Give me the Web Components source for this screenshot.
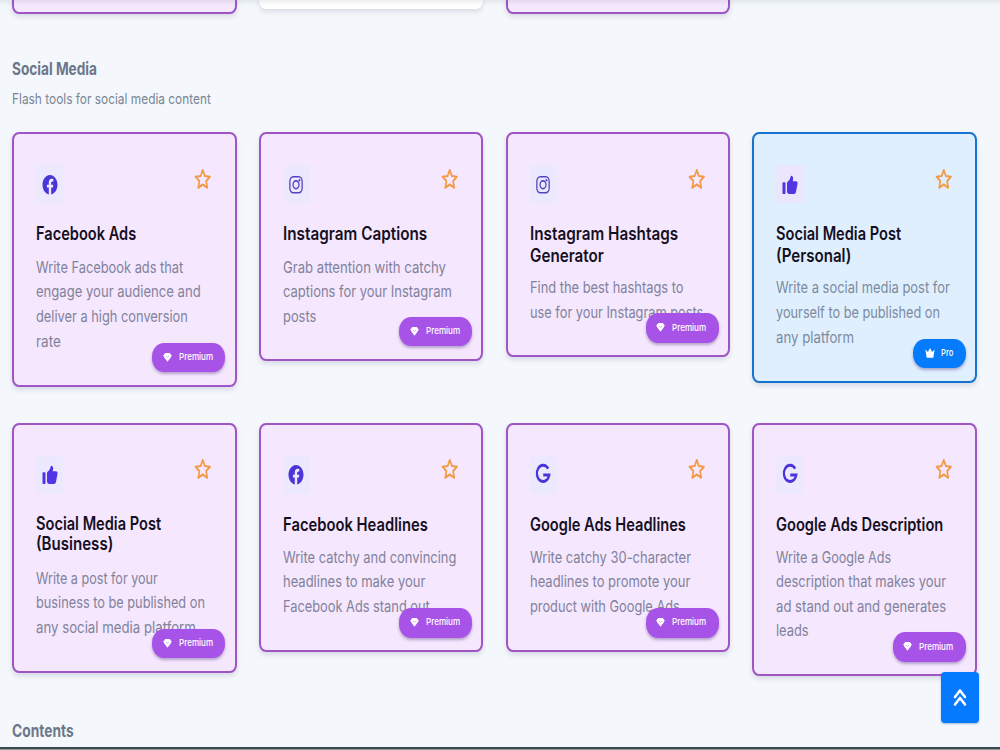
<!DOCTYPE html>
<html lang="en">
<head>
<meta charset="utf-8">
<title>Flash tools</title>
<style>
    html, body {
        margin: 0;
        height: 750px;
        overflow: hidden;
        background: #f4f8fc;
        font-family: Inter, "Open Sans", sans-serif;
    }
</style>
</head>
<body>
<tool-page>
    <card-row slot="previous" style="--top: -240px">
        <tool-card style="--h: 253.5px"></tool-card>
        <tool-card kind="plain" style="--h: 249px"></tool-card>
        <tool-card style="--h: 253.5px"></tool-card>
    </card-row>

    <section-head>
        <fit-line w="85">Social Media</fit-line>
        <fit-line slot="sub" w="198.5">Flash tools for social media content</fit-line>
    </section-head>

    <card-row style="--row: 290.3px">
        <tool-card icon="facebook" badge="Premium" style="--h: 254.5px; --gap: 10.6px">
            <fit-line slot="title" w="100.5">Facebook Ads</fit-line>
            <fit-line w="147.5">Write Facebook ads that</fit-line>
            <fit-line w="165">engage your audience and</fit-line>
            <fit-line w="151.5">deliver a high conversion</fit-line>
            <fit-line w="24.5">rate</fit-line>
        </tool-card>
        <tool-card icon="instagram" badge="Premium" style="--h: 228.7px; --gap: 10.6px">
            <fit-line slot="title" w="144.5">Instagram Captions</fit-line>
            <fit-line w="162.5">Grab attention with catchy</fit-line>
            <fit-line w="168.5">captions for your Instagram</fit-line>
            <fit-line w="33">posts</fit-line>
        </tool-card>
        <tool-card icon="instagram" badge="Premium" style="--h: 225.2px; --gap: 9.2px; --lh: 21.5px">
            <fit-line slot="title" w="148.5">Instagram Hashtags</fit-line>
            <fit-line slot="title" w="73.5">Generator</fit-line>
            <fit-line w="153.5">Find the best hashtags to</fit-line>
            <fit-line w="173.5">use for your Instagram posts</fit-line>
        </tool-card>
        <tool-card kind="pro" icon="thumb" badge="Pro" style="--h: 250.7px; --gap: 9.2px; --lh: 21.5px">
            <fit-line slot="title" w="125">Social Media Post</fit-line>
            <fit-line slot="title" w="75.5">(Personal)</fit-line>
            <fit-line w="173.5">Write a social media post for</fit-line>
            <fit-line w="164">yourself to be published on</fit-line>
            <fit-line w="78.5">any platform</fit-line>
        </tool-card>
    </card-row>

    <card-row>
        <tool-card icon="thumb" badge="Premium" style="--h: 250px; --gap: 10.5px; --lh: 20.8px">
            <fit-line slot="title" w="125">Social Media Post</fit-line>
            <fit-line slot="title" w="77">(Business)</fit-line>
            <fit-line w="122">Write a post for your</fit-line>
            <fit-line w="169">business to be published on</fit-line>
            <fit-line w="159.5">any social media platform</fit-line>
        </tool-card>
        <tool-card icon="facebook" badge="Premium" style="--h: 229.6px; --gap: 10px">
            <fit-line slot="title" w="144.5">Facebook Headlines</fit-line>
            <fit-line w="173.5">Write catchy and convincing</fit-line>
            <fit-line w="142">headlines to make your</fit-line>
            <fit-line w="146.5">Facebook Ads stand out</fit-line>
        </tool-card>
        <tool-card icon="google" badge="Premium" style="--h: 229.6px; --gap: 10px">
            <fit-line slot="title" w="156">Google Ads Headlines</fit-line>
            <fit-line w="161">Write catchy 30-character</fit-line>
            <fit-line w="160.5">headlines to promote your</fit-line>
            <fit-line w="149.5">product with Google Ads</fit-line>
        </tool-card>
        <tool-card icon="google" badge="Premium" style="--h: 253.7px; --gap: 10px">
            <fit-line slot="title" w="167">Google Ads Description</fit-line>
            <fit-line w="115.5">Write a Google Ads</fit-line>
            <fit-line w="170">description that makes your</fit-line>
            <fit-line w="170">ad stand out and generates</fit-line>
            <fit-line w="33">leads</fit-line>
        </tool-card>
    </card-row>

    <section-head style="--head-top: 42.7px">
        <fit-line w="61.5">Contents</fit-line>
    </section-head>

    <top-button slot="floating"></top-button>
</tool-page>

<script>
// single line of text, condensed to the width given in "w"
class FitLine extends HTMLElement {
    constructor() {
        super();
        this.attachShadow({mode: "open"}).innerHTML = `
            <style>
                :host { display: block; white-space: nowrap; }
                span { display: inline-block; transform-origin: 0 50%; }
            </style>
            <span><slot></slot></span>`;
    }

    connectedCallback() {
        const span = this.shadowRoot.querySelector("span");
        this.style.width = this.getAttribute("w") + "px";
        span.style.transform = `scaleX(${this.getAttribute("w") / span.offsetWidth})`;
    }
}

// icons are stretched vertically like the rest of the page
const ICONS = {
    facebook: `<path fill="#4a36d8" d="M12 2C6.5 2 2 6.5 2 12c0 5 3.7 9.1 8.4 9.9v-7H7.9V12h2.5V9.8c0-2.5 1.5-3.9 3.8-3.9 1.1 0 2.2.2 2.2.2v2.5h-1.3c-1.2 0-1.6.8-1.6 1.6V12h2.8l-.4 2.9h-2.3v7C18.3 21.1 22 17 22 12c0-5.5-4.5-10-10-10z"/>`,
    instagram: `<g fill="none" stroke="#5443bd" stroke-width="1.7"><rect x="3.800" y="3.800" width="16.400" height="16.400" rx="4.500"/><circle cx="12" cy="12" r="4"/></g><circle cx="16.600" cy="7.400" r="1.200" fill="#5443bd"/>`,
    thumb: `<path fill="#4f35e6" d="M2 10.500a1 1 0 0 1 1-1h2a1 1 0 0 1 1 1V20.500a1 1 0 0 1-1 1H3a1 1 0 0 1-1-1zM8 10.500c0-.6.3-1.1.8-1.500 2-1.500 3.300-3 3.900-5 .2-.9 1-1.300 1.900-1 1.400.5 1.900 2 1.600 3L15.600 8.500H20c1.400 0 2.300 1.200 2 2.500l-2 8.200c-.4 1.500-1.400 2.300-2.800 2.300H11c-1.800 0-3-1.200-3-2.800z"/>`,
    google: `<path fill="none" stroke="#4a36d8" stroke-width="3" d="M19 5.800A8.300 8.300 0 1 0 20.300 12.200H12.300"/>`,
    star: `<path fill="none" stroke="#f29a45" stroke-width="2.300" stroke-linejoin="round" d="M12 2.200l2.900 6.600 7 .7-5.300 4.800 1.600 7.200-6.200-3.500-6.200 3.500 1.600-7.200L2.100 9.500l7-.7z"/>`,
    Premium: `<path fill="#fff" d="M6 2h12l4.500 5.500-1 4L12 22.500l-9.500-11-1-4z"/><path fill="none" stroke="#b873ec" stroke-width="1.400" d="M7.500 9l4.500 3L16.500 9"/>`,
    Pro: `<path fill="#fff" d="M1 5l6 5 5-8 5 8 6-5-3 16.500H4z"/>`
};

function icon(name) {
    return `<svg viewBox="0 0 24 24" preserveAspectRatio="none">${ICONS[name]}</svg>`;
}

class TierBadge extends HTMLElement {
    constructor() {
        super();
        this.attachShadow({mode: "open"});
    }

    connectedCallback() {
        const tier = this.getAttribute("tier");
        this.shadowRoot.innerHTML = `
            <style>
                :host {
                    display: flex;
                    align-items: center;
                    box-sizing: border-box;
                    width: 73px;
                    height: 29.5px;
                    padding: 0 0 1px 10.5px;
                    border-radius: 12px / 14px;
                    background: #a853e7;
                    box-shadow: 0 2px 3px rgba(60, 30, 110, .35);
                    color: #fff;
                    font-size: 9.5px;
                    font-weight: 500;
                    line-height: 14px;
                }
                :host([tier="Pro"]) { width: 53px; padding-left: 12px; background: #067bfb; }
                svg { width: 9px; height: 10.5px; margin-right: 7px; }
                :host([tier="Pro"]) svg { width: 10px; height: 12px; margin-right: 6.5px; }
            </style>
            ${icon(tier)}<fit-line w="${tier === "Pro" ? 12 : 34}">${tier}</fit-line>`;
    }
}

class ToolCard extends HTMLElement {
    constructor() {
        super();
        this.attachShadow({mode: "open"});
    }

    connectedCallback() {
        const name = this.getAttribute("icon");
        const tier = this.getAttribute("badge");
        this.shadowRoot.innerHTML = `
            <style>
                :host {
                    display: block;
                    position: relative;
                    box-sizing: border-box;
                    height: var(--h);
                    padding: 31px 22px 0;
                    border: 2px solid #a055c4;
                    border-radius: 7px / 8px;
                    background: #f5e7fe;
                    box-shadow: 0 3px 5px rgba(60, 50, 100, .14);
                }
                :host([kind="pro"]) { background: #dfeffe; border-color: #1673cf; }
                :host([kind="plain"]) { background: #fff; border-color: #fff; }
                header { display: flex; justify-content: space-between; height: 38px; margin-bottom: 20px; }
                .tile {
                    display: flex;
                    align-items: center;
                    justify-content: center;
                    width: 27px;
                    height: 38px;
                    border-radius: 3px;
                    background: #ece8fe;
                }
                :host([kind="pro"]) .tile { background: #ebe6fc; }
                .tile svg { width: 18px; height: 23.5px; }
                .star { width: 17.5px; height: 22px; margin: 2.7px .7px 0 0; }
                .star svg { display: block; width: 17.5px; height: 22px; }
                .title { color: #15101f; font-size: 18px; font-weight: 600; line-height: var(--lh, 21px); }
                .text { margin-top: var(--gap); color: #81829b; font-size: 16px; line-height: 24.6px; }
                :host([kind="pro"]) .text { color: #7c8ba0; }
                tier-badge { position: absolute; right: 9.3px; bottom: 12.5px; }
            </style>
            ${name ? `<header>
                <div class="tile">${icon(name)}</div>
                <div class="star">${icon("star")}</div>
            </header>` : ""}
            <div class="title"><slot name="title"></slot></div>
            <div class="text"><slot></slot></div>
            ${tier ? `<tier-badge tier="${tier}"></tier-badge>` : ""}`;
    }
}

class CardRow extends HTMLElement {
    constructor() {
        super();
        this.attachShadow({mode: "open"}).innerHTML = `
            <style>
                :host {
                    display: grid;
                    grid-template-columns: repeat(4, 224.5px);
                    column-gap: 22.3px;
                    align-items: start;
                    height: var(--row, 254px);
                    margin-top: var(--top, 0);
                }
            </style>
            <slot></slot>`;
    }
}

class SectionHead extends HTMLElement {
    constructor() {
        super();
        this.attachShadow({mode: "open"}).innerHTML = `
            <style>
                :host { display: block; box-sizing: border-box; padding-top: var(--head-top, 43px); height: 118.3px; }
                .name { color: #6c7789; font-size: 17.5px; font-weight: 700; line-height: 24px; }
                .sub { margin-top: 7px; color: #7b8594; font-size: 14.5px; line-height: 22px; }
            </style>
            <div class="name"><slot></slot></div>
            <div class="sub"><slot name="sub"></slot></div>`;
    }
}

class TopButton extends HTMLElement {
    constructor() {
        super();
        this.attachShadow({mode: "open"}).innerHTML = `
            <style>
                :host {
                    position: absolute;
                    right: 21.5px;
                    bottom: 27.5px;
                    display: flex;
                    align-items: center;
                    justify-content: center;
                    width: 37.5px;
                    height: 51px;
                    border-radius: 4px;
                    background: #057aff;
                    box-shadow: 0 1px 2px rgba(0, 60, 140, .35);
                }
                svg { width: 14px; height: 19px; margin-top: 1px; }
            </style>
            <svg viewBox="0 0 14 19" fill="none" stroke="#fff" stroke-width="2.6" stroke-linecap="round" stroke-linejoin="round">
                <path d="M2 9l5-6.5L12 9M2 16.500l5-6.500 5 6.500"/>
            </svg>`;
    }
}

class ToolPage extends HTMLElement {
    constructor() {
        super();
        this.attachShadow({mode: "open"}).innerHTML = `
            <style>
                :host {
                    display: flow-root;
                    position: relative;
                    box-sizing: border-box;
                    height: 750px;
                    padding: 0 12px;
                    overflow: hidden;
                }
                .fade { position: absolute; inset: 0 0 auto; height: 6px; background: linear-gradient(rgba(90, 100, 120, .1), transparent); }
                .edge { position: absolute; inset: auto 0 0; height: 2px; border-bottom: 1px solid #8b999e; background: #3c4a4e; }
            </style>
            <slot name="previous"></slot>
            <slot></slot>
            <div class="fade"></div>
            <div class="edge"></div>
            <slot name="floating"></slot>`;
    }
}

customElements.define("tier-badge", TierBadge);
customElements.define("tool-card", ToolCard);
customElements.define("card-row", CardRow);
customElements.define("section-head", SectionHead);
customElements.define("top-button", TopButton);
customElements.define("tool-page", ToolPage);
// last, so that lines are measured with their final font size
customElements.define("fit-line", FitLine);
</script>
</body>
</html>
